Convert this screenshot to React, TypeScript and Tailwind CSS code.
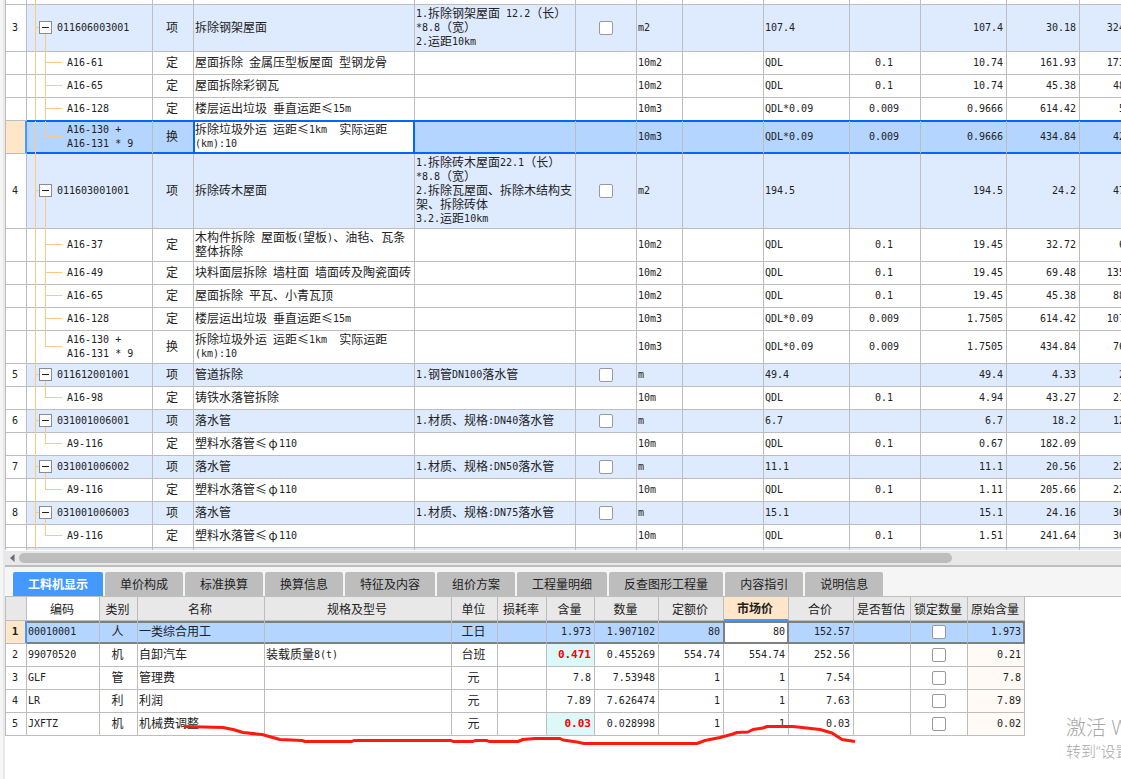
import React from 'react';

type Kind = 'item' | 'child' | 'last';

interface BillRow {
  no?: string;
  kind: Kind;
  code: string;
  cat: string;
  name: string;
  feature?: string;
  unit: string;
  expr: string;
  content?: string;
  qty: string;
  price: string;
  total: string;
  selected?: boolean;
}

const bill: BillRow[] = [
  { no: '3', kind: 'item', code: '011606003001', cat: '项', name: '拆除钢架屋面', feature: '1.拆除钢架屋面 12.2（长）\n*8.8（宽）\n2.运距10km', unit: 'm2', expr: '107.4', qty: '107.4', price: '30.18', total: '3241.33' },
  { kind: 'child', code: 'A16-61', cat: '定', name: '屋面拆除 金属压型板屋面 型钢龙骨', unit: '10m2', expr: 'QDL', content: '0.1', qty: '10.74', price: '161.93', total: '1739.13' },
  { kind: 'child', code: 'A16-65', cat: '定', name: '屋面拆除彩钢瓦', unit: '10m2', expr: 'QDL', content: '0.1', qty: '10.74', price: '45.38', total: '487.38' },
  { kind: 'child', code: 'A16-128', cat: '定', name: '楼层运出垃圾 垂直运距≤15m', unit: '10m3', expr: 'QDL*0.09', content: '0.009', qty: '0.9666', price: '614.42', total: '593.9' },
  { kind: 'last', code: 'A16-130 +\nA16-131 * 9', cat: '换', name: '拆除垃圾外运 运距≤1km  实际运距\n(km):10', unit: '10m3', expr: 'QDL*0.09', content: '0.009', qty: '0.9666', price: '434.84', total: '420.32', selected: true },
  { no: '4', kind: 'item', code: '011603001001', cat: '项', name: '拆除砖木屋面', feature: '1.拆除砖木屋面22.1（长）\n*8.8（宽）\n2.拆除瓦屋面、拆除木结构支\n架、拆除砖体\n3.2.运距10km', unit: 'm2', expr: '194.5', qty: '194.5', price: '24.2', total: '4706.9' },
  { kind: 'child', code: 'A16-37', cat: '定', name: '木构件拆除 屋面板(望板)、油毡、瓦条\n整体拆除', unit: '10m2', expr: 'QDL', content: '0.1', qty: '19.45', price: '32.72', total: '636.4' },
  { kind: 'child', code: 'A16-49', cat: '定', name: '块料面层拆除 墙柱面 墙面砖及陶瓷面砖', unit: '10m2', expr: 'QDL', content: '0.1', qty: '19.45', price: '69.48', total: '1351.39' },
  { kind: 'child', code: 'A16-65', cat: '定', name: '屋面拆除 平瓦、小青瓦顶', unit: '10m2', expr: 'QDL', content: '0.1', qty: '19.45', price: '45.38', total: '882.64' },
  { kind: 'child', code: 'A16-128', cat: '定', name: '楼层运出垃圾 垂直运距≤15m', unit: '10m3', expr: 'QDL*0.09', content: '0.009', qty: '1.7505', price: '614.42', total: '1075.54' },
  { kind: 'last', code: 'A16-130 +\nA16-131 * 9', cat: '换', name: '拆除垃圾外运 运距≤1km  实际运距\n(km):10', unit: '10m3', expr: 'QDL*0.09', content: '0.009', qty: '1.7505', price: '434.84', total: '761.19' },
  { no: '5', kind: 'item', code: '011612001001', cat: '项', name: '管道拆除', feature: '1.钢管DN100落水管', unit: 'm', expr: '49.4', qty: '49.4', price: '4.33', total: '213.9' },
  { kind: 'last', code: 'A16-98', cat: '定', name: '铸铁水落管拆除', unit: '10m', expr: 'QDL', content: '0.1', qty: '4.94', price: '43.27', total: '213.75' },
  { no: '6', kind: 'item', code: '031001006001', cat: '项', name: '落水管', feature: '1.材质、规格:DN40落水管', unit: 'm', expr: '6.7', qty: '6.7', price: '18.2', total: '121.94' },
  { kind: 'last', code: 'A9-116', cat: '定', name: '塑料水落管≤φ110', unit: '10m', expr: 'QDL', content: '0.1', qty: '0.67', price: '182.09', total: '122' },
  { no: '7', kind: 'item', code: '031001006002', cat: '项', name: '落水管', feature: '1.材质、规格:DN50落水管', unit: 'm', expr: '11.1', qty: '11.1', price: '20.56', total: '228.22' },
  { kind: 'last', code: 'A9-116', cat: '定', name: '塑料水落管≤φ110', unit: '10m', expr: 'QDL', content: '0.1', qty: '1.11', price: '205.66', total: '228.28' },
  { no: '8', kind: 'item', code: '031001006003', cat: '项', name: '落水管', feature: '1.材质、规格:DN75落水管', unit: 'm', expr: '15.1', qty: '15.1', price: '24.16', total: '364.82' },
  { kind: 'last', code: 'A9-116', cat: '定', name: '塑料水落管≤φ110', unit: '10m', expr: 'QDL', content: '0.1', qty: '1.51', price: '241.64', total: '364.88' },
];

const tabs = ['工料机显示', '单价构成', '标准换算', '换算信息', '特征及内容', '组价方案', '工程量明细', '反查图形工程量', '内容指引', '说明信息'];

const resourceHeads = ['编码', '类别', '名称', '规格及型号', '单位', '损耗率', '含量', '数量', '定额价', '市场价', '合价', '是否暂估', '锁定数量', '原始含量'];

interface Resource {
  code: string;
  cat: string;
  name: string;
  spec?: string;
  unit: string;
  content: string;
  changed?: boolean;
  qty: string;
  base: string;
  market: string;
  total: string;
  original: string;
}

const resources: Resource[] = [
  { code: '00010001', cat: '人', name: '一类综合用工', unit: '工日', content: '1.973', qty: '1.907102', base: '80', market: '80', total: '152.57', original: '1.973' },
  { code: '99070520', cat: '机', name: '自卸汽车', spec: '装载质量8(t)', unit: '台班', content: '0.471', changed: true, qty: '0.455269', base: '554.74', market: '554.74', total: '252.56', original: '0.21' },
  { code: 'GLF', cat: '管', name: '管理费', unit: '元', content: '7.8', qty: '7.53948', base: '1', market: '1', total: '7.54', original: '7.8' },
  { code: 'LR', cat: '利', name: '利润', unit: '元', content: '7.89', qty: '7.626474', base: '1', market: '1', total: '7.63', original: '7.89' },
  { code: 'JXFTZ', cat: '机', name: '机械费调整', unit: '元', content: '0.03', changed: true, qty: '0.028998', base: '1', market: '1', total: '0.03', original: '0.02' },
];

// Latin runs are set in a half-width monospace face, Chinese runs in the full-width one.
function T({ children, bold }: { children?: string; bold?: boolean }) {
  if (!children) return null;
  const parts = children.split(/([\x20-\x7e]+|φ|≤)/).filter(Boolean);
  return (
    <>
      {parts.map((p, i) => {
        if (p === 'φ' || p === '≤') {
          return <span key={i} className="inline-block w-3 text-center leading-none">{p}</span>;
        }
        return /^[\x20-\x7e]+$/.test(p) ? (
          <span
            key={i}
            className={
              bold
                ? "align-[1px] font-['DejaVu_Sans_Mono',monospace] text-[11px] leading-none font-bold"
                : "align-[1px] font-['DejaVu_Sans_Mono',monospace] text-[10px] leading-none"
            }
          >
            {p}
          </span>
        ) : (
          <React.Fragment key={i}>{p}</React.Fragment>
        );
      })}
    </>
  );
}

function Check({ label }: { label: string }) {
  return (
    <input
      type="checkbox"
      aria-label={label}
      className="mx-auto block h-3.5 w-3.5 appearance-none rounded-[2px] border border-[#999] bg-white"
    />
  );
}

function Tree({ kind }: { kind: Kind }) {
  return (
    <>
      <i className="absolute top-0 -bottom-px left-2 w-px bg-[#ffc880]" />
      {kind === 'item' && (
        <>
          <i className="absolute top-1/2 left-2 -mt-px h-px w-1 bg-[#ffc880]" />
          <i className="absolute top-1/2 -bottom-px left-[18px] w-px bg-[#ffc880]" />
        </>
      )}
      {kind === 'child' && <i className="absolute top-0 -bottom-px left-[18px] w-px bg-[#ffc880]" />}
      {kind === 'last' && <i className="absolute top-0 bottom-1/2 left-[18px] w-px bg-[#ffc880]" />}
      {kind !== 'item' && <i className="absolute top-1/2 left-[18px] -mt-px h-px w-[17px] bg-[#ffc880]" />}
    </>
  );
}

const line = 'border-r border-b border-[#bdbdbd]';
const selLine = 'border-r border-b border-r-[#bdbdbd] border-b-[#0066ff]';
const pad = 'pt-px pb-[3px] pl-px pr-[3px]';
const checkPad = 'p-[2px]';

function BillLine({ row }: { row: BillRow }) {
  const sel = row.selected;
  const bg = sel ? 'bg-[#b3d5ff]' : row.kind === 'item' ? 'bg-[#deeafe]' : 'bg-white';
  const frame = sel
    ? `${selLine} ${bg} shadow-[0_-1px_0_#0066ff,inset_0_1px_0_#0066ff,inset_0_-1px_0_#0066ff]`
    : `${line} ${bg}`;
  const cell = `${frame} ${pad}`;
  return (
    <tr className="h-[23px]">
      <td
        className={
          sel
            ? 'border-r border-b border-l border-[#bdbdbd] border-r-[#4499ff] bg-[#ffe6c8] shadow-[inset_-1px_0_0_#4499ff]'
            : `border-l text-center ${line} ${pad} bg-white`
        }
      >
        <T>{row.no}</T>
      </td>
      <td className={`relative ${cell}`}>
        <Tree kind={row.kind} />
        {row.kind === 'item' ? (
          <div className="relative flex items-center gap-[5px] pl-[11px]">
            <button
              type="button"
              aria-label="折叠"
              className="flex h-[13px] w-[13px] items-center justify-center border border-[#8c8c8c] bg-white"
            >
              <i className="h-px w-[7px] bg-[#222]" />
            </button>
            <span><T>{row.code}</T></span>
          </div>
        ) : (
          <div className="pl-[39px]"><T>{row.code}</T></div>
        )}
      </td>
      <td className={`text-center ${cell}`}><T>{row.cat}</T></td>
      <td
        className={
          sel
            ? `${pad} border-r border-b border-[#0066ff] bg-white shadow-[0_-1px_0_#0066ff,-1px_0_0_#0066ff,inset_0_0_0_1px_#0066ff]`
            : cell
        }
      >
        <T>{row.name}</T>
      </td>
      <td className={cell}><T>{row.feature}</T></td>
      <td className={`${frame} ${checkPad}`}>{row.kind === 'item' && <Check label={`主要清单 ${row.code}`} />}</td>
      <td className={cell}><T>{row.unit}</T></td>
      <td className={cell} />
      <td className={cell}><T>{row.expr}</T></td>
      <td className={`text-center ${cell}`}><T>{row.content}</T></td>
      <td className={`text-right ${cell}`}><T>{row.qty}</T></td>
      <td className={`text-right ${cell}`}><T>{row.price}</T></td>
      <td className={`text-right ${cell}`}><T>{row.total}</T></td>
    </tr>
  );
}

function EdgeRow({ bottom }: { bottom?: boolean }) {
  return (
    <tr className={bottom ? 'h-[2px]' : 'h-[5px]'}>
      {Array.from({ length: 13 }, (_, i) => (
        <td
          key={i}
          className={`border-r border-[#bdbdbd] p-0 ${bottom ? '' : 'border-b'} ${i === 0 ? 'border-l' : ''} ${
            i === 1 ? 'relative' : ''
          } ${bottom && i > 0 ? 'bg-[#deeafe]' : 'bg-white'}`}
        >
          {i === 1 && <i className={`absolute top-0 left-2 w-px bg-[#ffc880] ${bottom ? 'bottom-0' : '-bottom-px'}`} />}
        </td>
      ))}
    </tr>
  );
}

function BillTable() {
  return (
    <div className="overflow-hidden bg-white pb-px">
      <table className="w-[1148px] table-fixed border-separate border-spacing-0 whitespace-pre">
        <colgroup>
          <col className="w-[22px]" />
          <col className="w-[126px]" />
          <col className="w-[41px]" />
          <col className="w-[221px]" />
          <col className="w-[161px]" />
          <col className="w-[61px]" />
          <col className="w-[46px]" />
          <col className="w-[81px]" />
          <col className="w-[86px]" />
          <col className="w-[71px]" />
          <col className="w-[86px]" />
          <col className="w-[73px]" />
          <col className="w-[73px]" />
        </colgroup>
        <tbody>
          <EdgeRow />
          {bill.map((r, i) => (
            <BillLine key={i} row={r} />
          ))}
          <EdgeRow bottom />
        </tbody>
      </table>
    </div>
  );
}

function ResourceLine({ row, index }: { row: Resource; index: number }) {
  const sel = index === 0;
  const frame = sel
    ? 'bg-[#b3d5ff] border-r border-b border-r-[#bdbdbd] border-b-[#808080] shadow-[inset_0_2px_0_#808080,inset_0_-1px_0_#808080]'
    : `${line} bg-white`;
  const cell = `${frame} ${pad}`;
  return (
    <tr className="h-[23px]">
      <td
        className={
          sel
            ? `border-r border-b border-l border-[#bdbdbd] border-r-[#4499ff] bg-[#ffe6c8] text-center shadow-[inset_-1px_0_0_#4499ff] ${pad}`
            : `border-l text-center ${line} ${pad} bg-white`
        }
      >
        <T bold={sel}>{String(index + 1)}</T>
      </td>
      <td className={cell}><T>{row.code}</T></td>
      <td className={`text-center ${cell}`}>{row.cat}</td>
      <td className={cell}>{row.name}</td>
      <td className={cell}><T>{row.spec}</T></td>
      <td className={`text-center ${cell}`}>{row.unit}</td>
      <td className={cell} />
      <td className={row.changed ? `text-right text-[#f50000] ${line} ${pad} bg-[#dcf8f8]` : `text-right ${cell}`}>
        <T bold={row.changed}>{row.content}</T>
      </td>
      <td className={`text-right ${cell}`}><T>{row.qty}</T></td>
      <td className={`text-right ${cell}`}><T>{row.base}</T></td>
      <td
        className={
          sel
            ? `${pad} border-r border-b border-[#808080] bg-white text-right shadow-[-1px_0_0_#808080,inset_0_0_0_1px_#808080,inset_0_2px_0_#808080]`
            : `text-right ${cell}`
        }
      >
        <T>{row.market}</T>
      </td>
      <td className={`text-right ${cell}`}><T>{row.total}</T></td>
      <td className={cell} />
      <td className={`${frame} ${checkPad}`}><Check label={`锁定数量 ${row.name}`} /></td>
      <td
        className={
          sel
            ? `${pad} border-r border-b border-[#808080] bg-[#b3d5ff] text-right shadow-[inset_0_2px_0_#808080,inset_-1px_-1px_0_#808080]`
            : `text-right ${line} ${pad} bg-[#fffaf5]`
        }
      >
        <T>{row.original}</T>
      </td>
    </tr>
  );
}

function ResourceTable() {
  return (
    <table className="w-[1020px] table-fixed border-separate border-spacing-0 whitespace-pre">
      <colgroup>
        <col className="w-[22px]" />
        <col className="w-[73px]" />
        <col className="w-[38px]" />
        <col className="w-[127px]" />
        <col className="w-[187px]" />
        <col className="w-[46px]" />
        <col className="w-[49px]" />
        <col className="w-[48px]" />
        <col className="w-[64px]" />
        <col className="w-[65px]" />
        <col className="w-[65px]" />
        <col className="w-[65px]" />
        <col className="w-[57px]" />
        <col className="w-[57px]" />
        <col className="w-[57px]" />
      </colgroup>
      <thead>
        <tr className="h-6">
          <th className={`border-l ${line} bg-[#e8e8e8] p-0`} />
          {resourceHeads.map((h) => (
            <th
              key={h}
              className={
                h === '市场价'
                  ? 'border-r border-b-2 border-r-[#bdbdbd] border-b-[#4499ff] bg-[#ffe6c8] py-0 pr-[2px] pl-0 font-bold'
                  : h === '编码'
                    ? `${line} bg-white py-0 pr-[2px] pl-0 font-normal`
                    : `${line} bg-[#e8e8e8] py-0 pr-[2px] pl-0 font-normal`
              }
            >
              {h}
            </th>
          ))}
        </tr>
      </thead>
      <tbody>
        {resources.map((r, i) => (
          <ResourceLine key={r.code} row={r} index={i} />
        ))}
      </tbody>
    </table>
  );
}

function ScrollBar() {
  return (
    <div className="flex h-[14px] items-center bg-[#e8e8e8] pl-[5px]">
      <button type="button" aria-label="向左滚动" className="h-2 w-[9px]">
        <svg viewBox="0 0 9 8" className="block h-2 w-[9px]">
          <path d="M4.5 0v8L0 4z" fill="#6b6b73" />
        </svg>
      </button>
      <div className="h-[10px] w-[84%] rounded-full bg-[#bdbdbd]" />
    </div>
  );
}

export default function App() {
  return (
    <div className="relative flex h-screen overflow-hidden bg-white font-['Noto_Sans_CJK_SC',sans-serif] text-[12px] leading-[14px] text-[#222]">
      <div className="w-[5px] shrink-0 border-r-2 border-[#e8e8e8] bg-[#f5f5f5]" />
      <main className="flex min-w-0 flex-1 flex-col">
        <BillTable />
        <ScrollBar />
        <div role="tablist" className="flex gap-[2px] border-t-2 border-b border-[#bdbdbd] bg-[#f5f5f5] pt-[5px] pl-2">
          {tabs.map((t, i) => (
            <button
              key={t}
              type="button"
              role="tab"
              aria-selected={i === 0}
              className={
                i === 0
                  ? 'h-6 rounded-t-[2px] bg-[#4499ff] px-[15px] font-bold whitespace-nowrap text-white'
                  : 'h-6 rounded-t-[2px] bg-[#bdbdbd] px-[15px] whitespace-nowrap'
              }
            >
              {t}
            </button>
          ))}
        </div>
        <ResourceTable />
      </main>
      <svg
        viewBox="180 720 680 28"
        className="pointer-events-none absolute top-[720px] left-[180px] h-7 w-[680px]"
        fill="none"
        stroke="#ff1a0f"
        strokeWidth="3"
        strokeLinejoin="round"
      >
        <path d="M184 726.500L223 727.500L233 729.500L243 732.500L262 734.500L271 737L280 739.500L302 740.500L305 741.500H352L354 740.500H451L453 741.500H473L475 740.500H487L489 741.500H518L523 739.500L535 738.500H560L563 740L577 742L584 743.500H697L705 740.500L720 737.500L733 734L737 732.500L748 732L753 729.500L763 728L767 726.500H793L820 729.500L832 733L842 739.500L855 741.500" />
      </svg>
      <div className="pointer-events-none absolute top-[714px] left-[1066px] font-['Open_Sans','Noto_Sans_CJK_SC',sans-serif] whitespace-nowrap text-[#a8a8a8]">
        <div className="text-[20px] leading-7 font-light">激活 Windows</div>
        <div className="text-[15px] leading-[19px] font-light">转到“设置”以激活 Windows。</div>
      </div>
    </div>
  );
}
